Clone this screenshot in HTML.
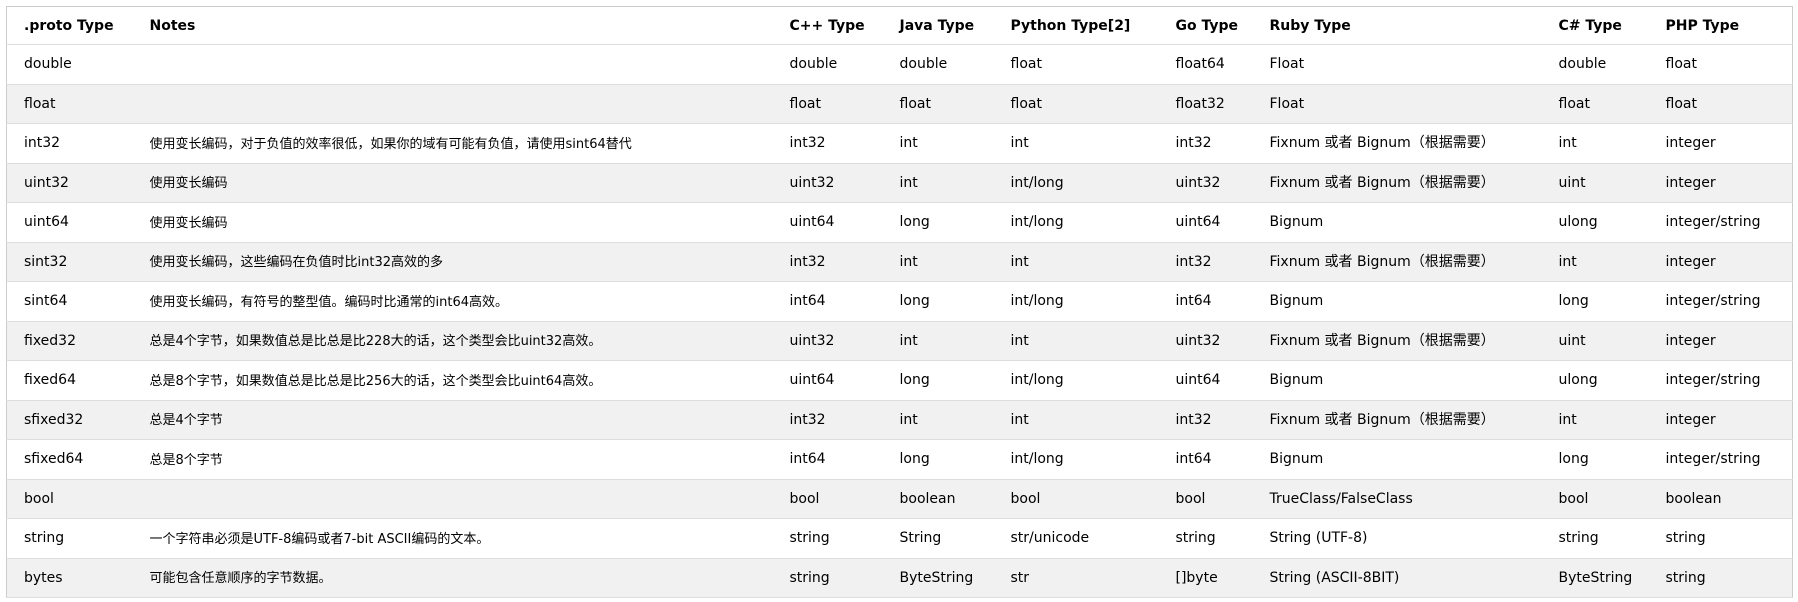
<!DOCTYPE html>
<html><head><meta charset="utf-8"><style>
body{margin:0;background:#fff;width:1798px;height:602px;overflow:hidden}
table{position:absolute;left:6px;top:6px;border-collapse:collapse;table-layout:fixed;width:1786px;border:1px solid #ccc;font-family:"DejaVu Sans","Noto Sans CJK SC",sans-serif;font-size:14px;color:#000}
th,td{padding:0;text-align:left;border-bottom:1px solid #ddd;white-space:nowrap;overflow:hidden;vertical-align:top}
th{font-weight:bold}
th>div,td>div{height:38.5px;display:flex;align-items:center;padding-left:17px;line-height:18px;box-sizing:border-box}
th>div{height:37px}
tbody tr:nth-child(even){background:#f1f1f1}
.n{font-size:13px;padding-top:3px}
</style></head><body>
<table>
<colgroup><col style="width:126px"><col style="width:640px"><col style="width:110px"><col style="width:111px"><col style="width:165px"><col style="width:94px"><col style="width:289px"><col style="width:107px"><col style="width:144px"></colgroup>
<thead><tr><th><div>.proto Type</div></th><th><div>Notes</div></th><th><div>C++ Type</div></th><th><div>Java Type</div></th><th><div>Python Type[2]</div></th><th><div>Go Type</div></th><th><div>Ruby Type</div></th><th><div>C# Type</div></th><th><div>PHP Type</div></th></tr></thead>
<tbody>
<tr><td><div>double</div></td><td><div class="n"></div></td><td><div>double</div></td><td><div>double</div></td><td><div>float</div></td><td><div>float64</div></td><td><div>Float</div></td><td><div>double</div></td><td><div>float</div></td></tr>
<tr><td><div>float</div></td><td><div class="n"></div></td><td><div>float</div></td><td><div>float</div></td><td><div>float</div></td><td><div>float32</div></td><td><div>Float</div></td><td><div>float</div></td><td><div>float</div></td></tr>
<tr><td><div>int32</div></td><td><div class="n">使用变长编码，对于负值的效率很低，如果你的域有可能有负值，请使用sint64替代</div></td><td><div>int32</div></td><td><div>int</div></td><td><div>int</div></td><td><div>int32</div></td><td><div>Fixnum 或者 Bignum（根据需要）</div></td><td><div>int</div></td><td><div>integer</div></td></tr>
<tr><td><div>uint32</div></td><td><div class="n">使用变长编码</div></td><td><div>uint32</div></td><td><div>int</div></td><td><div>int/long</div></td><td><div>uint32</div></td><td><div>Fixnum 或者 Bignum（根据需要）</div></td><td><div>uint</div></td><td><div>integer</div></td></tr>
<tr><td><div>uint64</div></td><td><div class="n">使用变长编码</div></td><td><div>uint64</div></td><td><div>long</div></td><td><div>int/long</div></td><td><div>uint64</div></td><td><div>Bignum</div></td><td><div>ulong</div></td><td><div>integer/string</div></td></tr>
<tr><td><div>sint32</div></td><td><div class="n">使用变长编码，这些编码在负值时比int32高效的多</div></td><td><div>int32</div></td><td><div>int</div></td><td><div>int</div></td><td><div>int32</div></td><td><div>Fixnum 或者 Bignum（根据需要）</div></td><td><div>int</div></td><td><div>integer</div></td></tr>
<tr><td><div>sint64</div></td><td><div class="n">使用变长编码，有符号的整型值。编码时比通常的int64高效。</div></td><td><div>int64</div></td><td><div>long</div></td><td><div>int/long</div></td><td><div>int64</div></td><td><div>Bignum</div></td><td><div>long</div></td><td><div>integer/string</div></td></tr>
<tr><td><div>fixed32</div></td><td><div class="n">总是4个字节，如果数值总是比总是比228大的话，这个类型会比uint32高效。</div></td><td><div>uint32</div></td><td><div>int</div></td><td><div>int</div></td><td><div>uint32</div></td><td><div>Fixnum 或者 Bignum（根据需要）</div></td><td><div>uint</div></td><td><div>integer</div></td></tr>
<tr><td><div>fixed64</div></td><td><div class="n">总是8个字节，如果数值总是比总是比256大的话，这个类型会比uint64高效。</div></td><td><div>uint64</div></td><td><div>long</div></td><td><div>int/long</div></td><td><div>uint64</div></td><td><div>Bignum</div></td><td><div>ulong</div></td><td><div>integer/string</div></td></tr>
<tr><td><div>sfixed32</div></td><td><div class="n">总是4个字节</div></td><td><div>int32</div></td><td><div>int</div></td><td><div>int</div></td><td><div>int32</div></td><td><div>Fixnum 或者 Bignum（根据需要）</div></td><td><div>int</div></td><td><div>integer</div></td></tr>
<tr><td><div>sfixed64</div></td><td><div class="n">总是8个字节</div></td><td><div>int64</div></td><td><div>long</div></td><td><div>int/long</div></td><td><div>int64</div></td><td><div>Bignum</div></td><td><div>long</div></td><td><div>integer/string</div></td></tr>
<tr><td><div>bool</div></td><td><div class="n"></div></td><td><div>bool</div></td><td><div>boolean</div></td><td><div>bool</div></td><td><div>bool</div></td><td><div>TrueClass/FalseClass</div></td><td><div>bool</div></td><td><div>boolean</div></td></tr>
<tr><td><div>string</div></td><td><div class="n">一个字符串必须是UTF-8编码或者7-bit ASCII编码的文本。</div></td><td><div>string</div></td><td><div>String</div></td><td><div>str/unicode</div></td><td><div>string</div></td><td><div>String (UTF-8)</div></td><td><div>string</div></td><td><div>string</div></td></tr>
<tr><td><div>bytes</div></td><td><div class="n">可能包含任意顺序的字节数据。</div></td><td><div>string</div></td><td><div>ByteString</div></td><td><div>str</div></td><td><div>[]byte</div></td><td><div>String (ASCII-8BIT)</div></td><td><div>ByteString</div></td><td><div>string</div></td></tr>
</tbody></table>
</body></html>
